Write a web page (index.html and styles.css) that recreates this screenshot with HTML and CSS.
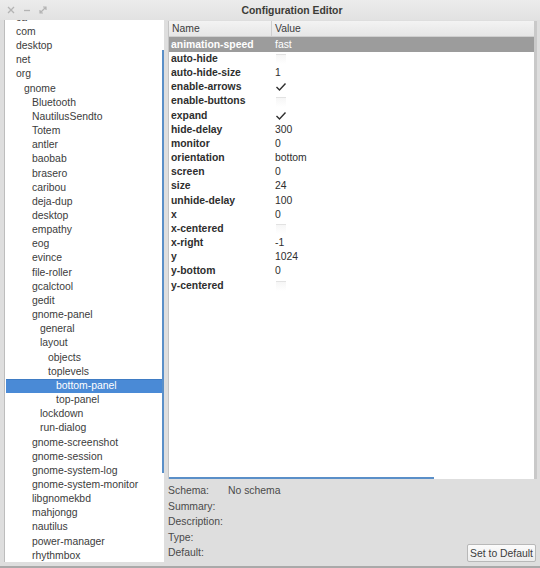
FILE: index.html
```html
<!DOCTYPE html>
<html>
<head>
<meta charset="utf-8">
<link rel="stylesheet" href="styles.css">
</head>
<body>
<div class="window">
  <div class="titlebar">
    <div class="wbtns">
      <svg class="wbtn" width="10" height="10" viewBox="0 0 10 10"><path d="M2 2 L8 8 M8 2 L2 8" stroke="#b4b4b4" stroke-width="1.3" fill="none"/></svg>
      <svg class="wbtn" width="10" height="10" viewBox="0 0 10 10"><path d="M2 5.5 H8" stroke="#b4b4b4" stroke-width="1.3" fill="none"/></svg>
      <svg class="wbtn" width="10" height="10" viewBox="0 0 10 10"><path d="M2 8 L8 2 M5 2 H8 V5 M2 5 V8 H5" stroke="#b4b4b4" stroke-width="1.2" fill="none"/></svg>
    </div>
    <div class="title">Configuration Editor</div>
  </div>
  <div class="main">
    <div class="tree">
      <div class="tlist">
        <div class="ti l0">ca</div>
        <div class="ti l0">com</div>
        <div class="ti l0">desktop</div>
        <div class="ti l0">net</div>
        <div class="ti l0">org</div>
        <div class="ti l1">gnome</div>
        <div class="ti l2">Bluetooth</div>
        <div class="ti l2">NautilusSendto</div>
        <div class="ti l2">Totem</div>
        <div class="ti l2">antler</div>
        <div class="ti l2">baobab</div>
        <div class="ti l2">brasero</div>
        <div class="ti l2">caribou</div>
        <div class="ti l2">deja-dup</div>
        <div class="ti l2">desktop</div>
        <div class="ti l2">empathy</div>
        <div class="ti l2">eog</div>
        <div class="ti l2">evince</div>
        <div class="ti l2">file-roller</div>
        <div class="ti l2">gcalctool</div>
        <div class="ti l2">gedit</div>
        <div class="ti l2">gnome-panel</div>
        <div class="ti l3">general</div>
        <div class="ti l3">layout</div>
        <div class="ti l4">objects</div>
        <div class="ti l4">toplevels</div>
        <div class="ti l5 sel">bottom-panel</div>
        <div class="ti l5">top-panel</div>
        <div class="ti l3">lockdown</div>
        <div class="ti l3">run-dialog</div>
        <div class="ti l2">gnome-screenshot</div>
        <div class="ti l2">gnome-session</div>
        <div class="ti l2">gnome-system-log</div>
        <div class="ti l2">gnome-system-monitor</div>
        <div class="ti l2">libgnomekbd</div>
        <div class="ti l2">mahjongg</div>
        <div class="ti l2">nautilus</div>
        <div class="ti l2">power-manager</div>
        <div class="ti l2">rhythmbox</div>
      </div>
      <div class="vscroll"></div>
    </div>
    <div class="right">
      <div class="table">
        <div class="thead">
          <div class="th c1">Name</div>
          <div class="th c2">Value</div>
        </div>
        <div class="tr rsel"><div class="td c1">animation-speed</div><div class="td c2">fast</div></div>
        <div class="tr"><div class="td c1">auto-hide</div><div class="td c2"><span class="cb"></span></div></div>
        <div class="tr"><div class="td c1">auto-hide-size</div><div class="td c2">1</div></div>
        <div class="tr"><div class="td c1">enable-arrows</div><div class="td c2"><svg class="ck" width="12" height="10" viewBox="0 0 12 10"><path d="M1.5 5 L4.5 8 L10.5 1.5" stroke="#2e2e2e" stroke-width="1.4" fill="none"/></svg></div></div>
        <div class="tr"><div class="td c1">enable-buttons</div><div class="td c2"><span class="cb"></span></div></div>
        <div class="tr"><div class="td c1">expand</div><div class="td c2"><svg class="ck" width="12" height="10" viewBox="0 0 12 10"><path d="M1.5 5 L4.5 8 L10.5 1.5" stroke="#2e2e2e" stroke-width="1.4" fill="none"/></svg></div></div>
        <div class="tr"><div class="td c1">hide-delay</div><div class="td c2">300</div></div>
        <div class="tr"><div class="td c1">monitor</div><div class="td c2">0</div></div>
        <div class="tr"><div class="td c1">orientation</div><div class="td c2">bottom</div></div>
        <div class="tr"><div class="td c1">screen</div><div class="td c2">0</div></div>
        <div class="tr"><div class="td c1">size</div><div class="td c2">24</div></div>
        <div class="tr"><div class="td c1">unhide-delay</div><div class="td c2">100</div></div>
        <div class="tr"><div class="td c1">x</div><div class="td c2">0</div></div>
        <div class="tr"><div class="td c1">x-centered</div><div class="td c2"><span class="cb"></span></div></div>
        <div class="tr"><div class="td c1">x-right</div><div class="td c2">-1</div></div>
        <div class="tr"><div class="td c1">y</div><div class="td c2">1024</div></div>
        <div class="tr"><div class="td c1">y-bottom</div><div class="td c2">0</div></div>
        <div class="tr"><div class="td c1">y-centered</div><div class="td c2"><span class="cb"></span></div></div>
        <div class="hscroll"></div>
      </div>
      <div class="info">
        <div class="irow"><span class="lbl">Schema:</span><span class="val">No schema</span></div>
        <div class="irow"><span class="lbl">Summary:</span></div>
        <div class="irow"><span class="lbl">Description:</span></div>
        <div class="irow"><span class="lbl">Type:</span></div>
        <div class="irow last"><span class="lbl">Default:</span><button class="btn">Set to Default</button></div>
      </div>
    </div>
  </div>
</div>
</body>
</html>
```
FILE: styles.css
```css
html, body {
  margin: 0;
  padding: 0;
}
body {
  width: 540px;
  height: 568px;
  overflow: hidden;
  background: #dcdcdc;
  font-family: "Liberation Sans", Arial, sans-serif;
  font-size: 10.4px;
  color: #3c3c3c;
}
.window {
  width: 540px;
  height: 566px;
  border-bottom: 2px solid #a9a9a9;
  background: #dedede;
  display: flex;
  flex-direction: column;
}
.titlebar {
  height: 20px;
  flex: none;
  display: flex;
  align-items: center;
  background: linear-gradient(#ececec, #e2e2e2);
  position: relative;
}
.wbtns {
  display: flex;
  gap: 6px;
  padding-left: 6px;
  width: 60px;
}
.wbtn {
  display: block;
}
.title {
  flex: 1;
  text-align: center;
  font-weight: bold;
  color: #3c3b37;
  padding-right: 34px;
  padding-left: 12px;
}
.main {
  flex: 1;
  display: flex;
  min-height: 0;
}
.tree {
  width: 159px;
  margin-left: 5px;
  height: 542px;
  background: #fff;
  overflow: hidden;
  position: relative;
  flex: none;
  box-shadow: -1px 0 0 #bdbdbd;
}
.tlist {
  margin-top: -9.2px;
}
.ti {
  height: 14.16px;
  line-height: 14.16px;
  white-space: nowrap;
  color: #3c3c3c;
}
.l0 { padding-left: 11px; }
.l1 { padding-left: 19px; }
.l2 { padding-left: 27px; }
.l3 { padding-left: 35px; }
.l4 { padding-left: 43px; }
.l5 { padding-left: 51px; }
.ti.sel {
  background: #4a8ad6;
  color: #fff;
  margin-right: 2px;
  margin-left: 1px;
  padding-left: 50px;
  box-shadow: inset 0 1px 0 #3f7cc4;
}
.vscroll {
  position: absolute;
  left: 157px;
  top: 30px;
  width: 2px;
  height: 423px;
  background: #5a8fc8;
}
.right {
  flex: 1;
  margin-left: 4px;
  margin-right: 3px;
  display: flex;
  flex-direction: column;
  padding-top: 1px;
}
.table {
  height: 458px;
  background: #fff;
  border-left: 1px solid #c4c4c4;
  border-right: 3px solid #c9c9c9;
  position: relative;
  flex: none;
}
.thead {
  display: flex;
  height: 16px;
  background: linear-gradient(#f3f3f3, #e6e6e6);
  border-bottom: 1px solid #cfcfcf;
  box-sizing: border-box;
  color: #3c3c3c;
}
.th {
  line-height: 15px;
}
.c1 {
  width: 103px;
  padding-left: 3px;
  box-sizing: border-box;
  flex: none;
}
.thead .c1 {
  border-right: 1px solid #cfcfcf;
}
.c2 {
  padding-left: 3px;
  flex: 1;
}
.tr {
  display: flex;
  height: 14.16px;
  line-height: 14.16px;
  color: #2e2e2e;
}
.td.c1 {
  font-weight: bold;
  padding-left: 2px;
}
.tr.rsel {
  background: #9c9c9c;
  color: #fff;
  height: 15px;
  line-height: 15px;
}
.tr.rsel .c1 {
  color: #fff;
}
.cb {
  display: inline-block;
  width: 10px;
  height: 9px;
  vertical-align: middle;
  margin-left: 1px;
  border-top: 1px solid #e2e2e2;
  background: linear-gradient(#f6f6f6, #ffffff);
}
.ck {
  display: block;
  margin-top: 2px;
}
.hscroll {
  position: absolute;
  left: 0;
  top: 456px;
  width: 265px;
  height: 2px;
  background: #5a8fc8;
}
.info {
  padding-top: 4px;
  display: flex;
  flex-direction: column;
}
.irow {
  height: 15.5px;
  line-height: 15.5px;
  display: flex;
  align-items: center;
  color: #4a4a4a;
}
.lbl {
  width: 60px;
  flex: none;
}
.irow.last {
  position: relative;
}
.btn {
  position: absolute;
  right: 1px;
  top: -1px;
  height: 18px;
  padding: 0 2px;
  font-family: "Liberation Sans", Arial, sans-serif;
  font-size: 10.4px;
  color: #3c3c3c;
  background: linear-gradient(#fbfbfb, #ececec);
  border: 1px solid #b8b8b8;
  border-radius: 2px;
}
```
